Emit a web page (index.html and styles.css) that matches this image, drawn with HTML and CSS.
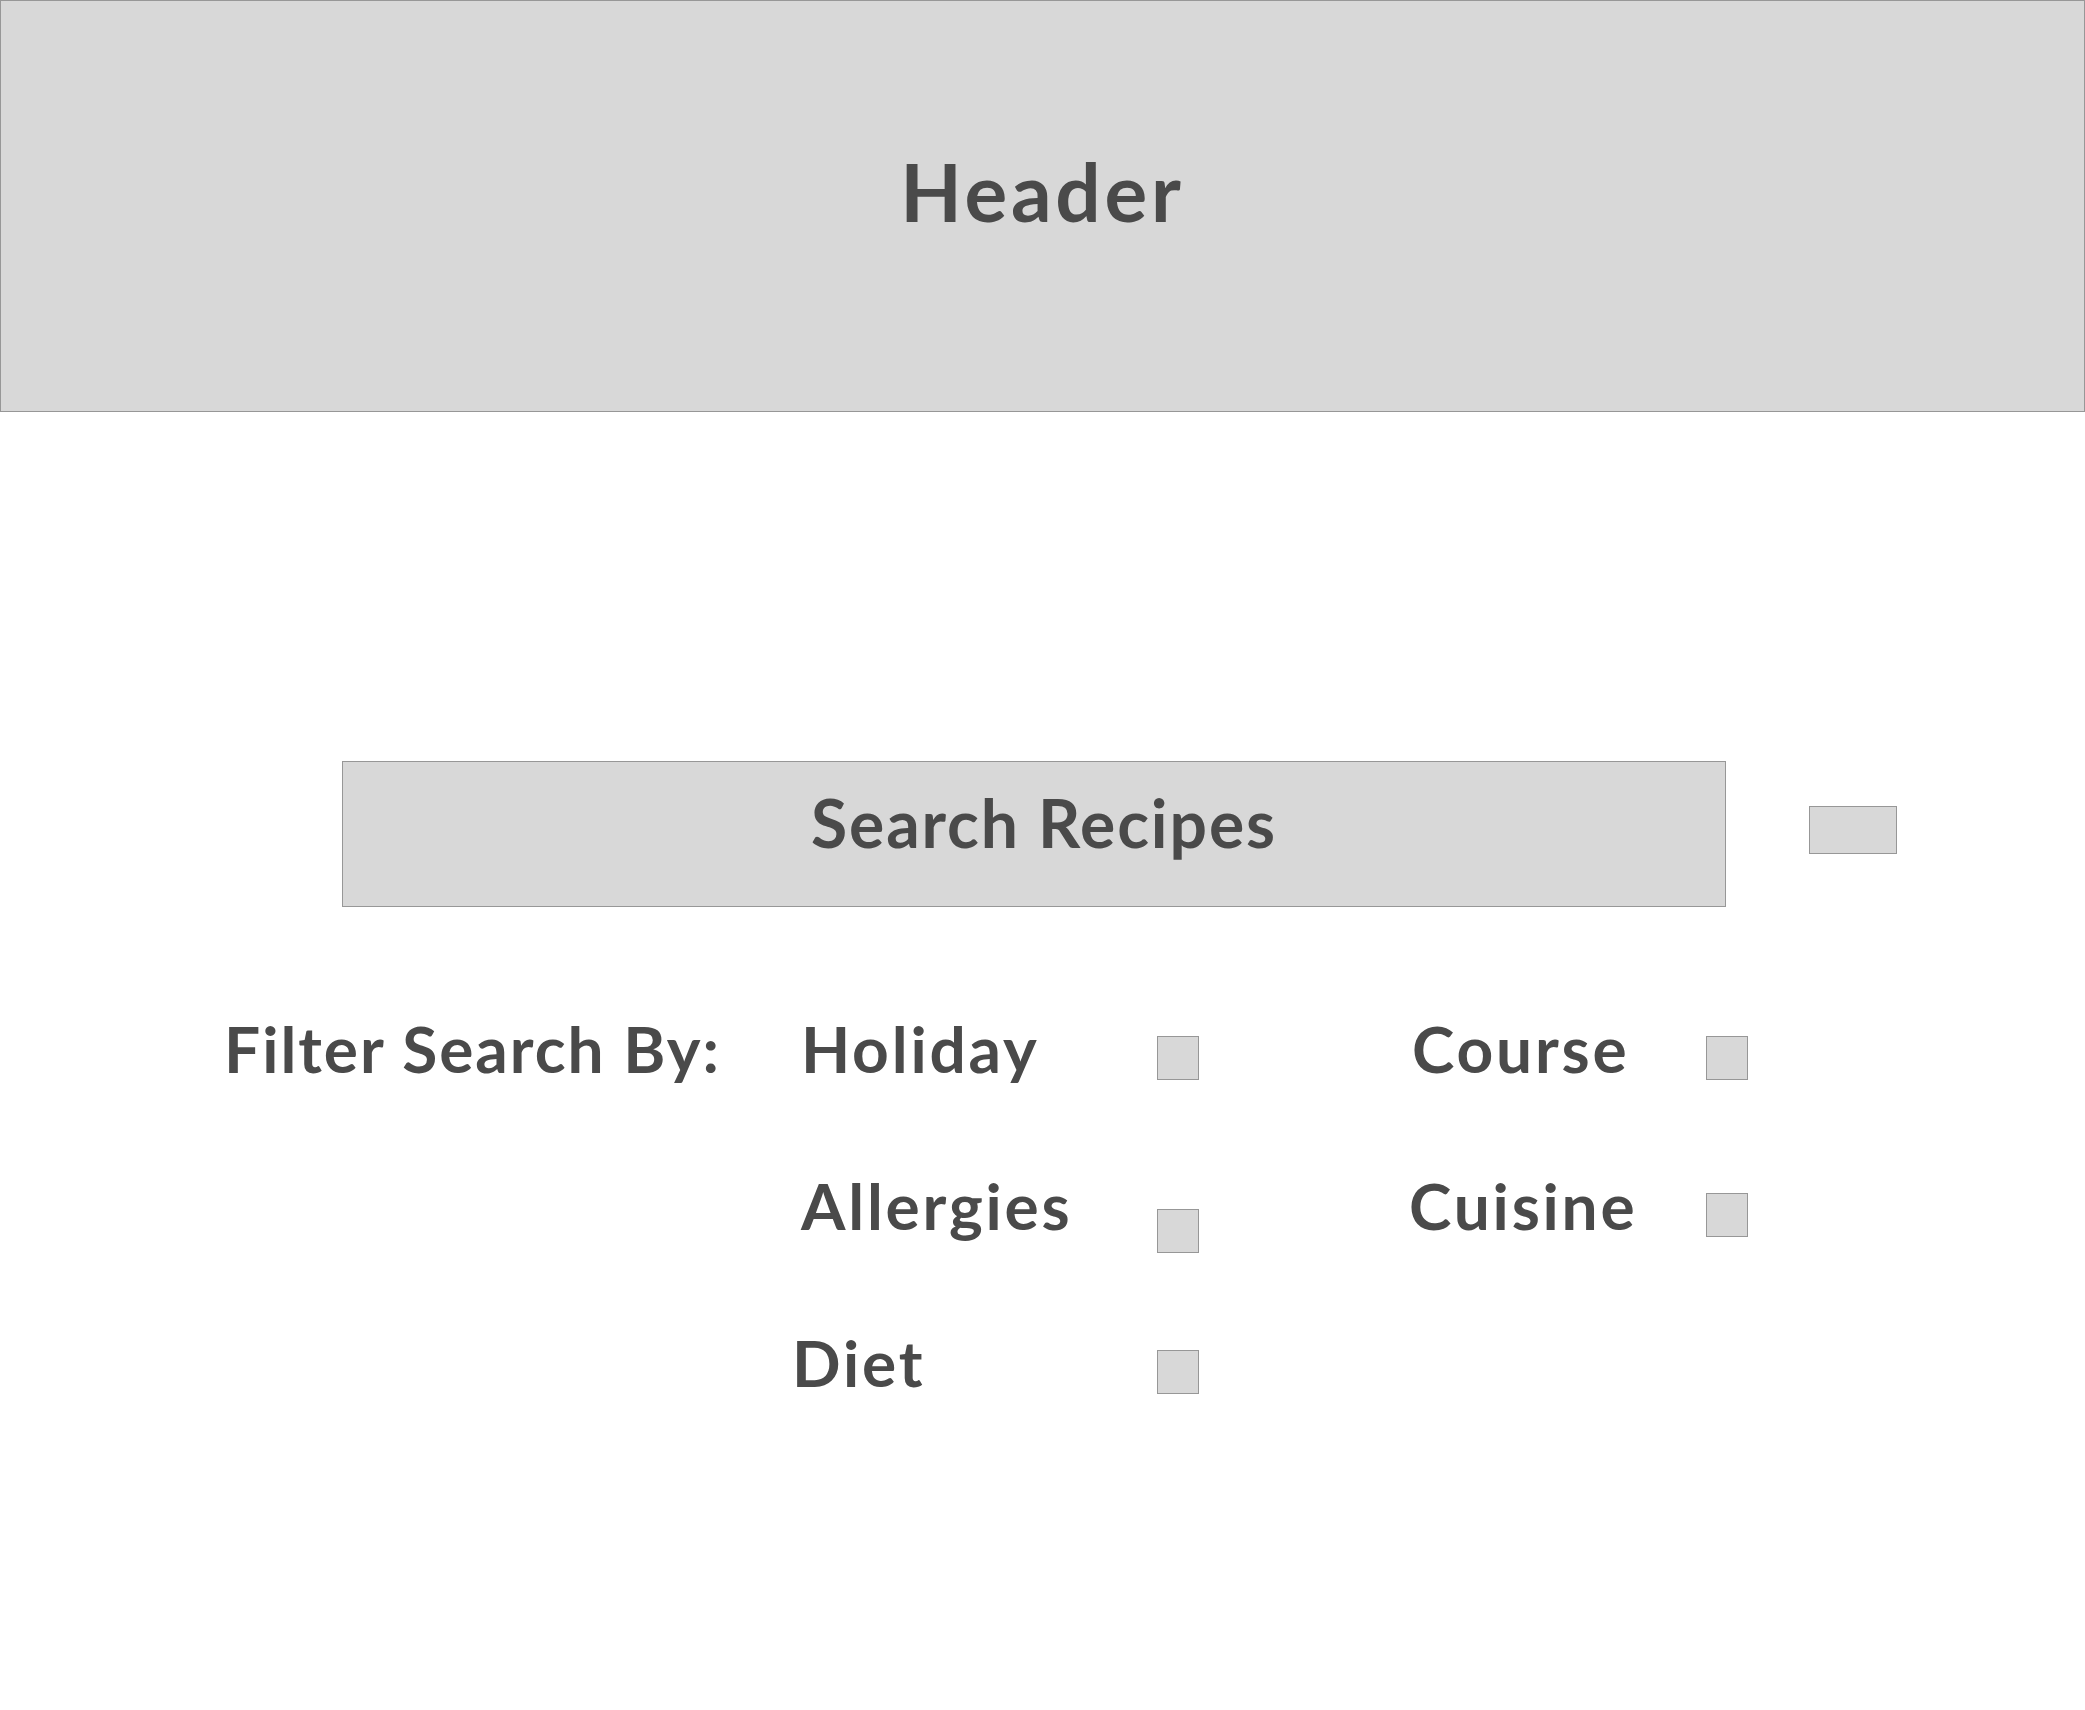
FILE: index.html
```html
<!DOCTYPE html>
<html lang="en">
<head>
<meta charset="utf-8">
<title>Search Recipes</title>
<link rel="stylesheet" href="styles.css">
</head>
<body>
  <header class="site-header">
    <h1 class="site-header__title">Header</h1>
  </header>

  <main class="main">
    <section class="search-row">
      <div class="search-box">Search Recipes</div>
      <div class="search-button"></div>
    </section>

    <section class="filters">
      <div class="filters__title">Filter Search By:</div>

      <div class="filter-label col-a row-1">Holiday</div>
      <div class="check check-a row-1"></div>
      <div class="filter-label col-b row-1">Course</div>
      <div class="check check-b row-1"></div>

      <div class="filter-label col-a row-2">Allergies</div>
      <div class="check check-a check--low row-2"></div>
      <div class="filter-label col-b filter-label--tight row-2">Cuisine</div>
      <div class="check check-b row-2"></div>

      <div class="filter-label col-a filter-label--outdent row-3">Diet</div>
      <div class="check check-a row-3"></div>
    </section>
  </main>
</body>
</html>
```

FILE: styles.css
```css
* {
  box-sizing: border-box;
}

html, body {
  margin: 0;
  padding: 0;
  background: #ffffff;
}

body {
  font-family: Lato, "Noto Sans", "Liberation Sans", sans-serif;
  font-weight: 700;
  color: #4a4a4a;
}

.site-header {
  height: 412px;
  background: #d8d8d8;
  border: 1px solid #979797;
  padding-top: 142px;
  text-align: center;
}

.site-header__title {
  margin: 0;
  font-size: 80px;
  line-height: 1.2;
  font-weight: 700;
  letter-spacing: 3.8px;
}

.main {
  padding-top: 349px;
}

.search-row {
  display: flex;
  align-items: flex-start;
  padding-left: 342px;
}

.search-box {
  width: 1384px;
  height: 146px;
  background: #d8d8d8;
  border: 1px solid #979797;
  padding-top: 21px;
  padding-left: 20px;
  text-align: center;
  font-size: 66px;
  line-height: 1.2;
  letter-spacing: 1.9px;
}

.search-button {
  width: 88px;
  height: 48px;
  margin-left: 83px;
  margin-top: 45px;
  background: #d8d8d8;
  border: 1px solid #979797;
}

.filters {
  display: grid;
  grid-template-columns: 577px 356px 42px 213px 294px 42px;
  grid-template-rows: 77px 77px 77px;
  row-gap: 80px;
  padding-left: 224px;
  margin-top: 104px;
  align-items: start;
}

.filters__title {
  grid-column: 1;
  grid-row: 1;
  font-size: 64px;
  line-height: 1.2;
  letter-spacing: 2px;
  white-space: nowrap;
}

.filter-label {
  font-size: 64px;
  line-height: 1.2;
  letter-spacing: 2.8px;
  white-space: nowrap;
}

.filter-label--outdent {
  margin-left: -9px;
}

.filter-label--tight {
  margin-left: -3px;
}

.col-a { grid-column: 2; }
.check-a { grid-column: 3; }
.col-b { grid-column: 5; }
.check-b { grid-column: 6; }

.row-1 { grid-row: 1; }
.row-2 { grid-row: 2; }
.row-3 { grid-row: 3; }

.check {
  width: 42px;
  height: 44px;
  margin-top: 25px;
  background: #d8d8d8;
  border: 1px solid #979797;
}

.check--low {
  margin-top: 41px;
}
```
